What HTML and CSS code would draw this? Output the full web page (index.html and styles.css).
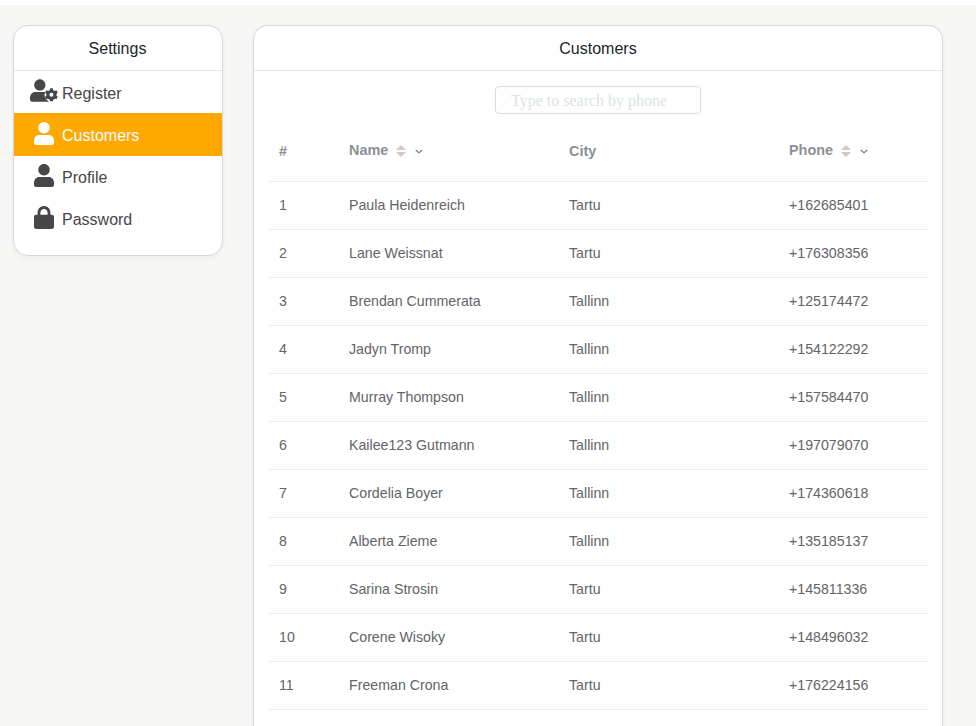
FILE: index.html
```html
<!DOCTYPE html>
<html lang="en">
<head>
<meta charset="utf-8">
<title>Customers</title>
<link rel="stylesheet" href="styles.css">
</head>
<body>
<svg class="defs" aria-hidden="true">
  <symbol id="user" viewBox="0 0 448 512"><path d="M224 256c70.7 0 128-57.31 128-128s-57.3-128-128-128C153.3 0 96 57.31 96 128S153.3 256 224 256z"/><path d="M120 290H328C400 290 448 350 448 420V464C448 492 430 512 402 512H46C18 512 0 492 0 464V420C0 350 48 290 120 290z"/></symbol>
  <symbol id="lock" viewBox="0 0 448 512"><path d="M80 192V144C80 64.47 144.5 0 224 0C303.5 0 368 64.47 368 144V192H400C428 192 448 212 448 240V464C448 492 428 512 400 512H48C20 512 0 492 0 464V240C0 212 20 192 48 192H80zM144 192H304V144C304 99.82 268.2 64 224 64C179.8 64 144 99.82 144 144V192z"/></symbol>
  <symbol id="user-gear" viewBox="0 0 640 512">
    <path d="M224 256c70.7 0 128-57.31 128-128s-57.3-128-128-128C153.3 0 96 57.31 96 128S153.3 256 224 256z"/><path d="M120 290H328C400 290 448 350 448 420V464C448 492 430 512 402 512H46C18 512 0 492 0 464V420C0 350 48 290 120 290z"/>
    <circle cx="490" cy="354" r="158" class="gap"/>
    <g transform="translate(490 354)">
      <rect x="-36" y="-150" width="72" height="300" rx="16"/>
      <rect x="-36" y="-150" width="72" height="300" rx="16" transform="rotate(60)"/>
      <rect x="-36" y="-150" width="72" height="300" rx="16" transform="rotate(120)"/>
      <circle r="118"/>
      <circle r="46" class="gap"/>
    </g>
  </symbol>
  <symbol id="sort" viewBox="0 0 10 12"><path d="M5 0 10 5H0zM0 7H10L5 12z"/></symbol>
  <symbol id="chevron" viewBox="0 0 8 5"><path d="M.8 1 4 3.8 7.2 1" fill="none" stroke="#6c7278" stroke-width="1.1"/></symbol>
</svg>
<main class="page">
  <aside class="card settings">
    <h2>Settings</h2>
    <nav>
      <a class="item"><span class="icon"><svg class="wide"><use href="#user-gear"/></svg></span>Register</a>
      <a class="item active"><span class="icon"><svg><use href="#user"/></svg></span>Customers</a>
      <a class="item"><span class="icon"><svg><use href="#user"/></svg></span>Profile</a>
      <a class="item"><span class="icon"><svg><use href="#lock"/></svg></span>Password</a>
    </nav>
  </aside>
  <section class="card customers">
    <h2>Customers</h2>
    <input class="search" type="text" placeholder="Type to search by phone">
    <table>
      <thead><tr>
        <th class="num">#</th>
        <th class="name"><span class="sortable">Name<svg class="sort"><use href="#sort"/></svg><svg class="chevron"><use href="#chevron"/></svg></span></th>
        <th class="city">City</th>
        <th><span class="sortable">Phone<svg class="sort"><use href="#sort"/></svg><svg class="chevron"><use href="#chevron"/></svg></span></th>
      </tr></thead>
      <tbody>
        <tr><td>1</td><td>Paula Heidenreich</td><td>Tartu</td><td>+162685401</td></tr>
        <tr><td>2</td><td>Lane Weissnat</td><td>Tartu</td><td>+176308356</td></tr>
        <tr><td>3</td><td>Brendan Cummerata</td><td>Tallinn</td><td>+125174472</td></tr>
        <tr><td>4</td><td>Jadyn Tromp</td><td>Tallinn</td><td>+154122292</td></tr>
        <tr><td>5</td><td>Murray Thompson</td><td>Tallinn</td><td>+157584470</td></tr>
        <tr><td>6</td><td>Kailee123 Gutmann</td><td>Tallinn</td><td>+197079070</td></tr>
        <tr><td>7</td><td>Cordelia Boyer</td><td>Tallinn</td><td>+174360618</td></tr>
        <tr><td>8</td><td>Alberta Zieme</td><td>Tallinn</td><td>+135185137</td></tr>
        <tr><td>9</td><td>Sarina Strosin</td><td>Tartu</td><td>+145811336</td></tr>
        <tr><td>10</td><td>Corene Wisoky</td><td>Tartu</td><td>+148496032</td></tr>
        <tr><td>11</td><td>Freeman Crona</td><td>Tartu</td><td>+176224156</td></tr>
      </tbody>
    </table>
  </section>
</main>
</body>
</html>
```
FILE: styles.css
```css
* { box-sizing: border-box; }
html, body { height: 100%; }
body {
  margin: 0;
  padding-top: 5px;
  overflow: hidden;
  background: #fff;
  font-family: "Liberation Sans", Arial, sans-serif;
}
.defs { display: none; }
.page {
  display: flex;
  align-items: flex-start;
  gap: 30px;
  height: 100%;
  padding: 20px 0 0 13px;
  background: #f7f7f5;
}
.card {
  background: #fff;
  border: 1px solid #d5d6d8;
  border-radius: 15px;
  box-shadow: 0 2px 6px rgba(0, 0, 0, 0.05);
}
.card h2 {
  height: 45px;
  margin: 0;
  border-bottom: 1px solid #e6e7e8;
  font-size: 16px;
  font-weight: 400;
  line-height: 45px;
  text-align: center;
  color: #212529;
}
.settings { width: 210px; height: 231px; }
.settings h2 { padding-right: 1px; }
.item {
  display: flex;
  align-items: center;
  height: 42px;
  padding: 3px 0 0 12px;
  font-size: 16px;
  line-height: 39px;
  color: #484648;
}
.item.active {
  height: 43px;
  margin-bottom: -1px;
  padding-top: 2px;
  background: #ffa800;
  color: #fff;
}
.icon {
  display: flex;
  justify-content: center;
  width: 36px;
  padding-bottom: 5px;
}
.icon svg { width: 20px; height: 23px; fill: currentColor; }
.icon svg.wide { width: 28px; margin-bottom: 2px; }
.gap { fill: #fff; }
.customers {
  width: 690px;
  height: 100%;
  border-bottom: 0;
  border-radius: 15px 15px 0 0;
}
.search {
  display: block;
  width: 206px;
  height: 28px;
  margin: 15px auto 7px;
  padding: 3px 15px 1px;
  border: 1px solid #dadae4;
  border-radius: 4px;
  font: 16px "Liberation Serif", "Times New Roman", serif;
}
.search::placeholder { color: #dbe3df; opacity: 1; }
table {
  width: 658px;
  margin-left: 15px;
  border-collapse: separate;
  border-spacing: 0;
  table-layout: fixed;
  font-size: 14.4px;
}
th, td {
  padding: 0 10px;
  border-bottom: 1px solid #ebecee;
  text-align: left;
}
th {
  height: 61px;
  color: #8b9097;
  font-weight: 700;
}
td {
  height: 48px;
  padding-bottom: 2px;
  font-size: 14.2px;
  color: #636467;
}
.num { width: 70px; }
.name, .city { width: 220px; }
.sortable { display: flex; align-items: center; padding-bottom: 2px; }
.sort { width: 10px; height: 12px; margin: 2px 9px 0 7.6px; fill: #d4c8c3; }
.chevron { width: 8px; height: 5px; margin-top: 3px; }
```
